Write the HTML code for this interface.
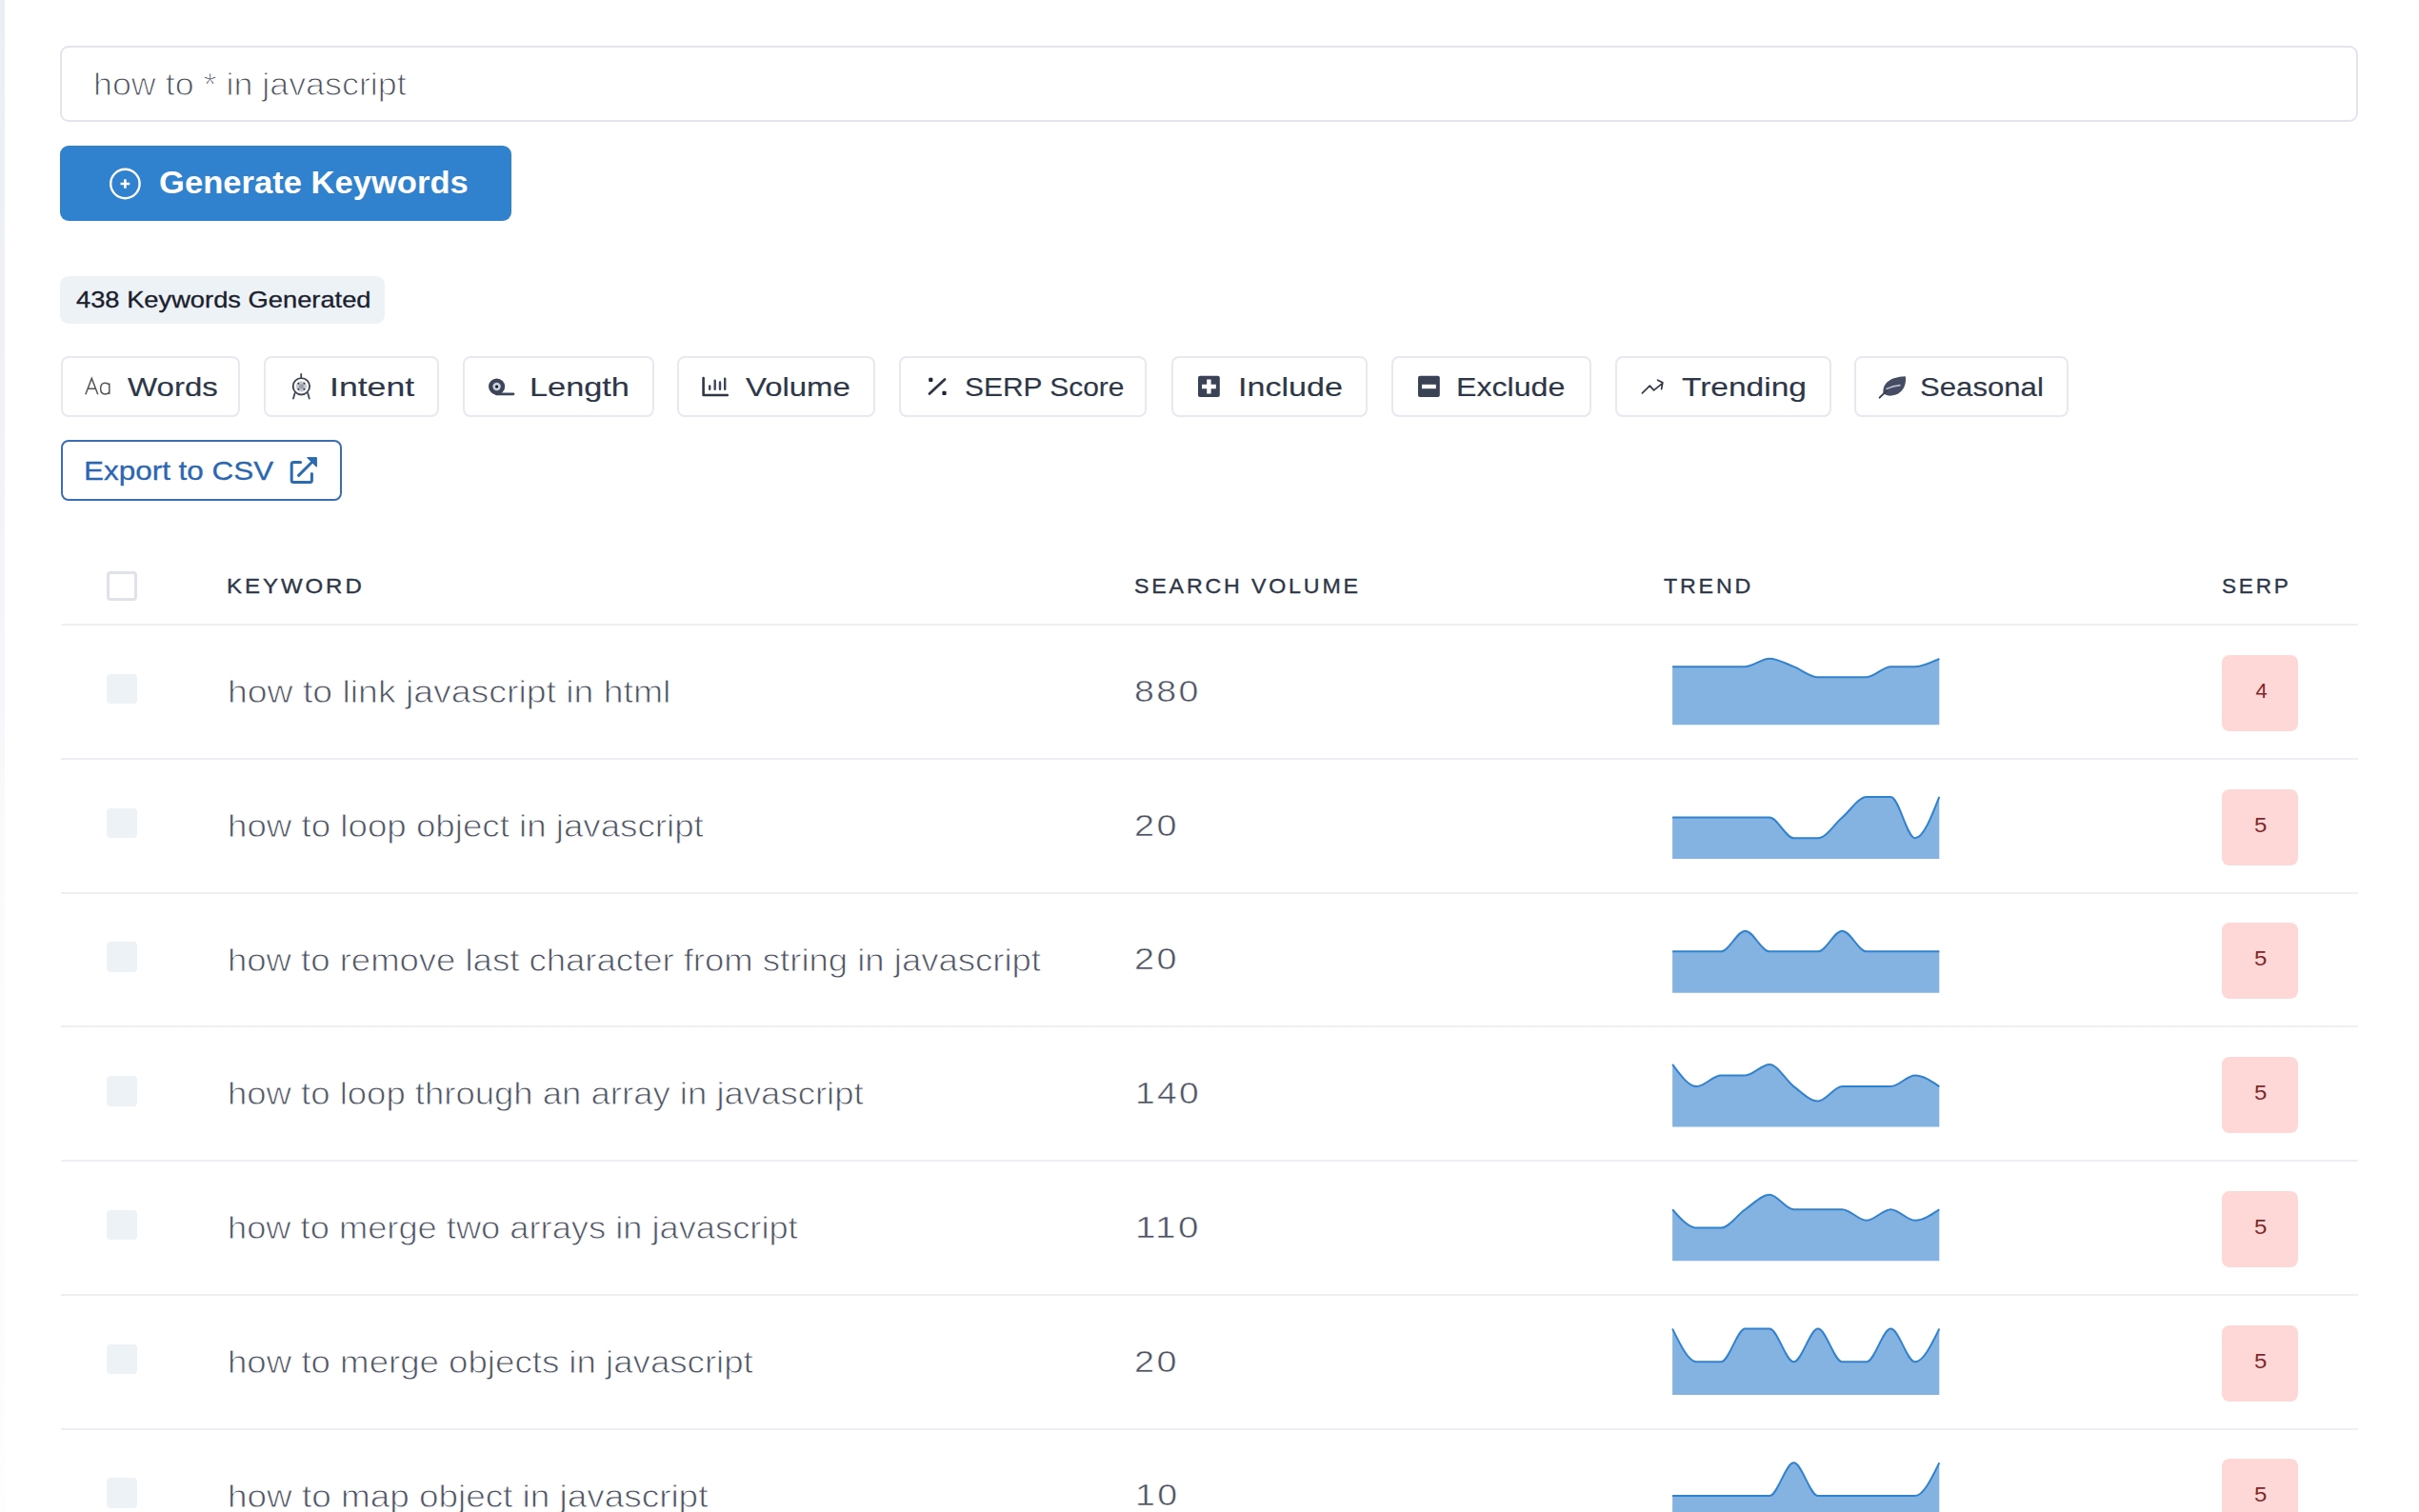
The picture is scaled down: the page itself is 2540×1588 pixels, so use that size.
<!DOCTYPE html>
<html><head><meta charset="utf-8">
<style>
html,body{margin:0;padding:0;background:#ffffff;}
body{width:2540px;height:1588px;position:relative;overflow:hidden;font-family:"Liberation Sans",sans-serif;}
#w{position:absolute;left:0;top:0;width:2540px;height:1588px;}
.t{position:absolute;white-space:nowrap;transform-origin:0 0;}
.box{position:absolute;box-sizing:border-box;}
svg{position:absolute;overflow:visible;}
</style></head><body><div id="w">
<div class="box" style="left:0;top:0;width:5px;height:1588px;background:linear-gradient(#eceef6 0px,#eef0f6 300px,#f6f7fa 760px,#fbfbfc 900px,#fdfdfd 1588px);"></div>
<div class="box" style="left:63px;top:48px;width:2413px;height:80px;border:2px solid #e2e5ee;border-radius:9px;"></div>
<div class="box" style="left:63px;top:153px;width:474px;height:79px;background:#3182ce;border-radius:9px;"></div>
<svg style="left:0;top:0" width="1" height="1"><circle cx="131.4" cy="193" r="15.2" fill="none" stroke="#fff" stroke-width="2.4"/><path d="M131.4 188.2V197.8M126.6 193H136.2" stroke="#fff" stroke-width="2.6"/></svg>
<div class="box" style="left:63px;top:290px;width:341px;height:50px;background:#edf2f7;border-radius:9px;"></div>
<div class="box" style="left:63.5px;top:374px;width:188.5px;height:64px;border:2px solid #e7e9f0;border-radius:8px;"></div>
<div class="box" style="left:276.5px;top:374px;width:184.5px;height:64px;border:2px solid #e7e9f0;border-radius:8px;"></div>
<div class="box" style="left:485.5px;top:374px;width:201.1px;height:64px;border:2px solid #e7e9f0;border-radius:8px;"></div>
<div class="box" style="left:711.0px;top:374px;width:208.4px;height:64px;border:2px solid #e7e9f0;border-radius:8px;"></div>
<div class="box" style="left:944.0px;top:374px;width:260.0px;height:64px;border:2px solid #e7e9f0;border-radius:8px;"></div>
<div class="box" style="left:1229.5px;top:374px;width:206.5px;height:64px;border:2px solid #e7e9f0;border-radius:8px;"></div>
<div class="box" style="left:1460.5px;top:374px;width:210.1px;height:64px;border:2px solid #e7e9f0;border-radius:8px;"></div>
<div class="box" style="left:1695.5px;top:374px;width:227.3px;height:64px;border:2px solid #e7e9f0;border-radius:8px;"></div>
<div class="box" style="left:1947.1px;top:374px;width:224.9px;height:64px;border:2px solid #e7e9f0;border-radius:8px;"></div>
<svg style="left:0;top:0" width="1" height="1"><path d="M89.8 414.2L96.3 397.4L102.8 414.2M92.2 408.2H100.4" fill="none" stroke="#555" stroke-width="1.5"/><path d="M114.8 402.6V414M114.8 404.5C114 402.8 112.3 402.2 110.3 402.2C107.3 402.2 105.6 404.6 105.6 408.1C105.6 411.6 107.3 414 110.3 414C112.3 414 114 413.2 114.8 411.5" fill="none" stroke="#555" stroke-width="1.5"/><circle cx="316.4" cy="405.8" r="8.7" fill="none" stroke="#3f4554" stroke-width="1.9"/><circle cx="316.4" cy="405.8" r="5.6" fill="#c4c8d0"/><circle cx="316.4" cy="405.8" r="2.6" fill="#9aa0aa"/><circle cx="313.4" cy="402.8" r="1" fill="#2f3544"/><circle cx="319.4" cy="402.8" r="1" fill="#2f3544"/><circle cx="313.4" cy="408.8" r="1" fill="#2f3544"/><circle cx="319.4" cy="408.8" r="1" fill="#2f3544"/><path d="M316.2 392.8V396.6M309.6 413L308 418.6M323.2 413L324.8 418.6" stroke="#3f4554" stroke-width="1.8" fill="none" stroke-linecap="round"/><circle cx="521.6" cy="406" r="8.6" fill="#3d4558"/><circle cx="521.6" cy="406" r="4.2" fill="#c9d0dc"/><circle cx="521.6" cy="406" r="1.6" fill="#111"/><path d="M521 413.8H539" stroke="#3d4558" stroke-width="2.8" stroke-linecap="round"/><path d="M738.6 397V415H763.8" fill="none" stroke="#2f3646" stroke-width="2.6" stroke-linecap="round" stroke-linejoin="round"/><path d="M745.2 405.5V408.8M750.7 399.8V408.8M756 401.5V408.8M761.2 397.6V408.8" stroke="#3d4558" stroke-width="2.4" stroke-linecap="round"/><path d="M976 413.6L992 398.4" stroke="#2f3646" stroke-width="2.8" stroke-linecap="round"/><rect x="975.2" y="396.8" width="4.2" height="4.2" rx="1" fill="#1e2433"/><rect x="989.4" y="410.8" width="4.2" height="4.2" rx="1" fill="#1e2433"/><rect x="1258" y="394.8" width="22.8" height="22.2" rx="2" fill="#3a4256"/><path d="M1269.4 398.6V413.4M1262 406H1276.8" stroke="#fff" stroke-width="4.4"/><rect x="1489" y="394.8" width="22.8" height="22.2" rx="2" fill="#3a4256"/><path d="M1493 406H1507.8" stroke="#fff" stroke-width="4.4"/><path d="M1724.4 412.8L1732.3 405.2L1736.6 409.8L1745.5 402.6M1740.6 399.2L1745.8 401.8L1744.6 408.6" fill="none" stroke="#333844" stroke-width="1.7" stroke-linecap="round" stroke-linejoin="round"/><path d="M1977.6 413.5C1976 404 1983 396 2000.8 395.3C2002.4 404.8 1997 414.8 1986 415.6C1982.6 415.8 1980 414.8 1977.6 413.5Z" fill="#454c63"/><path d="M1981 408.4C1986 406 1990.5 405 1995 404.6" stroke="#b7bfcc" stroke-width="1.6" fill="none" stroke-linecap="round"/><path d="M1973.6 417.6L1980.8 410.6" stroke="#3a3f4e" stroke-width="2" stroke-linecap="round"/></svg>
<div class="box" style="left:63.5px;top:462px;width:295px;height:64px;border:2px solid #3b6db3;border-radius:8px;"></div>
<svg style="left:0;top:0" width="1" height="1"><path d="M315.6 485.6H308.2Q306.2 485.6 306.2 487.6V504.6Q306.2 506.6 308.2 506.6H325.4Q327.4 506.6 327.4 504.6V497.6" fill="none" stroke="#2b6cb0" stroke-width="3" stroke-linecap="round" stroke-linejoin="round"/><path d="M313.6 499.4L327.2 485.8" stroke="#2b6cb0" stroke-width="3" stroke-linecap="round"/><path d="M322.6 480.6H332.4V490.2Z" fill="#2b6cb0" stroke="#2b6cb0" stroke-width="1" stroke-linejoin="round"/></svg>
<div class="box" style="left:112px;top:599.5px;width:31.5px;height:31px;border:3px solid #dfe2e8;border-radius:4px;"></div>
<div class="box" style="left:64px;top:655.0px;width:2412px;height:2px;background:#edeff2;"></div>
<div class="box" style="left:64px;top:795.8px;width:2412px;height:2px;background:#edeff2;"></div>
<div class="box" style="left:64px;top:936.5px;width:2412px;height:2px;background:#edeff2;"></div>
<div class="box" style="left:64px;top:1077.2px;width:2412px;height:2px;background:#edeff2;"></div>
<div class="box" style="left:64px;top:1218.0px;width:2412px;height:2px;background:#edeff2;"></div>
<div class="box" style="left:64px;top:1358.8px;width:2412px;height:2px;background:#edeff2;"></div>
<div class="box" style="left:64px;top:1499.5px;width:2412px;height:2px;background:#edeff2;"></div>
<div class="box" style="left:112px;top:707.7px;width:31.5px;height:31.5px;background:#edf2f7;border-radius:4px;"></div>
<div class="box" style="left:2333px;top:687.7px;width:80px;height:80px;background:#fed7d7;border-radius:8px;"></div>
<div class="box" style="left:112px;top:848.5px;width:31.5px;height:31.5px;background:#edf2f7;border-radius:4px;"></div>
<div class="box" style="left:2333px;top:828.5px;width:80px;height:80px;background:#fed7d7;border-radius:8px;"></div>
<div class="box" style="left:112px;top:989.2px;width:31.5px;height:31.5px;background:#edf2f7;border-radius:4px;"></div>
<div class="box" style="left:2333px;top:969.2px;width:80px;height:80px;background:#fed7d7;border-radius:8px;"></div>
<div class="box" style="left:112px;top:1130.0px;width:31.5px;height:31.5px;background:#edf2f7;border-radius:4px;"></div>
<div class="box" style="left:2333px;top:1110.0px;width:80px;height:80px;background:#fed7d7;border-radius:8px;"></div>
<div class="box" style="left:112px;top:1270.7px;width:31.5px;height:31.5px;background:#edf2f7;border-radius:4px;"></div>
<div class="box" style="left:2333px;top:1250.7px;width:80px;height:80px;background:#fed7d7;border-radius:8px;"></div>
<div class="box" style="left:112px;top:1411.5px;width:31.5px;height:31.5px;background:#edf2f7;border-radius:4px;"></div>
<div class="box" style="left:2333px;top:1391.5px;width:80px;height:80px;background:#fed7d7;border-radius:8px;"></div>
<div class="box" style="left:112px;top:1552.2px;width:31.5px;height:31.5px;background:#edf2f7;border-radius:4px;"></div>
<div class="box" style="left:2333px;top:1532.2px;width:80px;height:80px;background:#fed7d7;border-radius:8px;"></div>
<svg style="left:0;top:0" width="1" height="1"><path d="M1756.10,700.14 C1764.59,700.14 1773.08,700.14 1781.57,700.14 C1790.06,700.14 1798.55,700.14 1807.05,700.14 C1815.54,700.14 1824.03,700.14 1832.52,700.14 C1841.01,700.14 1849.50,691.80 1857.99,691.80 C1866.48,691.80 1874.97,696.90 1883.46,700.14 C1891.95,703.38 1900.45,711.26 1908.94,711.26 C1917.43,711.26 1925.92,711.26 1934.41,711.26 C1942.90,711.26 1951.39,711.26 1959.88,711.26 C1968.37,711.26 1976.86,700.14 1985.35,700.14 C1993.85,700.14 2002.34,700.14 2010.83,700.14 C2019.32,700.14 2027.81,695.97 2036.30,691.80 L2036.30,761.30 L1756.10,761.30 Z" fill="#84b3e2"/><path d="M1756.10,700.14 C1764.59,700.14 1773.08,700.14 1781.57,700.14 C1790.06,700.14 1798.55,700.14 1807.05,700.14 C1815.54,700.14 1824.03,700.14 1832.52,700.14 C1841.01,700.14 1849.50,691.80 1857.99,691.80 C1866.48,691.80 1874.97,696.90 1883.46,700.14 C1891.95,703.38 1900.45,711.26 1908.94,711.26 C1917.43,711.26 1925.92,711.26 1934.41,711.26 C1942.90,711.26 1951.39,711.26 1959.88,711.26 C1968.37,711.26 1976.86,700.14 1985.35,700.14 C1993.85,700.14 2002.34,700.14 2010.83,700.14 C2019.32,700.14 2027.81,695.97 2036.30,691.80" fill="none" stroke="#3182ce" stroke-width="2"/><path d="M1756.10,858.61 C1764.59,858.61 1773.08,858.61 1781.57,858.61 C1790.06,858.61 1798.55,858.61 1807.05,858.61 C1815.54,858.61 1824.03,858.61 1832.52,858.61 C1841.01,858.61 1849.50,858.61 1857.99,858.61 C1866.48,858.61 1874.97,880.33 1883.46,880.33 C1891.95,880.33 1900.45,880.33 1908.94,880.33 C1917.43,880.33 1925.92,865.85 1934.41,858.61 C1942.90,851.37 1951.39,836.89 1959.88,836.89 C1968.37,836.89 1976.86,836.89 1985.35,836.89 C1993.85,836.89 2002.34,880.33 2010.83,880.33 C2019.32,880.33 2027.81,858.61 2036.30,836.89 L2036.30,902.05 L1756.10,902.05 Z" fill="#84b3e2"/><path d="M1756.10,858.61 C1764.59,858.61 1773.08,858.61 1781.57,858.61 C1790.06,858.61 1798.55,858.61 1807.05,858.61 C1815.54,858.61 1824.03,858.61 1832.52,858.61 C1841.01,858.61 1849.50,858.61 1857.99,858.61 C1866.48,858.61 1874.97,880.33 1883.46,880.33 C1891.95,880.33 1900.45,880.33 1908.94,880.33 C1917.43,880.33 1925.92,865.85 1934.41,858.61 C1942.90,851.37 1951.39,836.89 1959.88,836.89 C1968.37,836.89 1976.86,836.89 1985.35,836.89 C1993.85,836.89 2002.34,880.33 2010.83,880.33 C2019.32,880.33 2027.81,858.61 2036.30,836.89" fill="none" stroke="#3182ce" stroke-width="2"/><path d="M1756.10,999.36 C1764.59,999.36 1773.08,999.36 1781.57,999.36 C1790.06,999.36 1798.55,999.36 1807.05,999.36 C1815.54,999.36 1824.03,977.64 1832.52,977.64 C1841.01,977.64 1849.50,999.36 1857.99,999.36 C1866.48,999.36 1874.97,999.36 1883.46,999.36 C1891.95,999.36 1900.45,999.36 1908.94,999.36 C1917.43,999.36 1925.92,977.64 1934.41,977.64 C1942.90,977.64 1951.39,999.36 1959.88,999.36 C1968.37,999.36 1976.86,999.36 1985.35,999.36 C1993.85,999.36 2002.34,999.36 2010.83,999.36 C2019.32,999.36 2027.81,999.36 2036.30,999.36 L2036.30,1042.80 L1756.10,1042.80 Z" fill="#84b3e2"/><path d="M1756.10,999.36 C1764.59,999.36 1773.08,999.36 1781.57,999.36 C1790.06,999.36 1798.55,999.36 1807.05,999.36 C1815.54,999.36 1824.03,977.64 1832.52,977.64 C1841.01,977.64 1849.50,999.36 1857.99,999.36 C1866.48,999.36 1874.97,999.36 1883.46,999.36 C1891.95,999.36 1900.45,999.36 1908.94,999.36 C1917.43,999.36 1925.92,977.64 1934.41,977.64 C1942.90,977.64 1951.39,999.36 1959.88,999.36 C1968.37,999.36 1976.86,999.36 1985.35,999.36 C1993.85,999.36 2002.34,999.36 2010.83,999.36 C2019.32,999.36 2027.81,999.36 2036.30,999.36" fill="none" stroke="#3182ce" stroke-width="2"/><path d="M1756.10,1117.91 C1764.59,1129.49 1773.08,1141.08 1781.57,1141.08 C1790.06,1141.08 1798.55,1129.49 1807.05,1129.49 C1815.54,1129.49 1824.03,1129.49 1832.52,1129.49 C1841.01,1129.49 1849.50,1117.91 1857.99,1117.91 C1866.48,1117.91 1874.97,1134.64 1883.46,1141.08 C1891.95,1147.51 1900.45,1156.52 1908.94,1156.52 C1917.43,1156.52 1925.92,1141.08 1934.41,1141.08 C1942.90,1141.08 1951.39,1141.08 1959.88,1141.08 C1968.37,1141.08 1976.86,1141.08 1985.35,1141.08 C1993.85,1141.08 2002.34,1129.49 2010.83,1129.49 C2019.32,1129.49 2027.81,1135.29 2036.30,1141.08 L2036.30,1183.55 L1756.10,1183.55 Z" fill="#84b3e2"/><path d="M1756.10,1117.91 C1764.59,1129.49 1773.08,1141.08 1781.57,1141.08 C1790.06,1141.08 1798.55,1129.49 1807.05,1129.49 C1815.54,1129.49 1824.03,1129.49 1832.52,1129.49 C1841.01,1129.49 1849.50,1117.91 1857.99,1117.91 C1866.48,1117.91 1874.97,1134.64 1883.46,1141.08 C1891.95,1147.51 1900.45,1156.52 1908.94,1156.52 C1917.43,1156.52 1925.92,1141.08 1934.41,1141.08 C1942.90,1141.08 1951.39,1141.08 1959.88,1141.08 C1968.37,1141.08 1976.86,1141.08 1985.35,1141.08 C1993.85,1141.08 2002.34,1129.49 2010.83,1129.49 C2019.32,1129.49 2027.81,1135.29 2036.30,1141.08" fill="none" stroke="#3182ce" stroke-width="2"/><path d="M1756.10,1270.24 C1764.59,1279.90 1773.08,1289.55 1781.57,1289.55 C1790.06,1289.55 1798.55,1289.55 1807.05,1289.55 C1815.54,1289.55 1824.03,1276.04 1832.52,1270.24 C1841.01,1264.45 1849.50,1254.80 1857.99,1254.80 C1866.48,1254.80 1874.97,1270.24 1883.46,1270.24 C1891.95,1270.24 1900.45,1270.24 1908.94,1270.24 C1917.43,1270.24 1925.92,1270.24 1934.41,1270.24 C1942.90,1270.24 1951.39,1281.83 1959.88,1281.83 C1968.37,1281.83 1976.86,1270.24 1985.35,1270.24 C1993.85,1270.24 2002.34,1281.83 2010.83,1281.83 C2019.32,1281.83 2027.81,1276.04 2036.30,1270.24 L2036.30,1324.30 L1756.10,1324.30 Z" fill="#84b3e2"/><path d="M1756.10,1270.24 C1764.59,1279.90 1773.08,1289.55 1781.57,1289.55 C1790.06,1289.55 1798.55,1289.55 1807.05,1289.55 C1815.54,1289.55 1824.03,1276.04 1832.52,1270.24 C1841.01,1264.45 1849.50,1254.80 1857.99,1254.80 C1866.48,1254.80 1874.97,1270.24 1883.46,1270.24 C1891.95,1270.24 1900.45,1270.24 1908.94,1270.24 C1917.43,1270.24 1925.92,1270.24 1934.41,1270.24 C1942.90,1270.24 1951.39,1281.83 1959.88,1281.83 C1968.37,1281.83 1976.86,1270.24 1985.35,1270.24 C1993.85,1270.24 2002.34,1281.83 2010.83,1281.83 C2019.32,1281.83 2027.81,1276.04 2036.30,1270.24" fill="none" stroke="#3182ce" stroke-width="2"/><path d="M1756.10,1395.55 C1764.59,1412.92 1773.08,1430.30 1781.57,1430.30 C1790.06,1430.30 1798.55,1430.30 1807.05,1430.30 C1815.54,1430.30 1824.03,1395.55 1832.52,1395.55 C1841.01,1395.55 1849.50,1395.55 1857.99,1395.55 C1866.48,1395.55 1874.97,1430.30 1883.46,1430.30 C1891.95,1430.30 1900.45,1395.55 1908.94,1395.55 C1917.43,1395.55 1925.92,1430.30 1934.41,1430.30 C1942.90,1430.30 1951.39,1430.30 1959.88,1430.30 C1968.37,1430.30 1976.86,1395.55 1985.35,1395.55 C1993.85,1395.55 2002.34,1430.30 2010.83,1430.30 C2019.32,1430.30 2027.81,1412.92 2036.30,1395.55 L2036.30,1465.05 L1756.10,1465.05 Z" fill="#84b3e2"/><path d="M1756.10,1395.55 C1764.59,1412.92 1773.08,1430.30 1781.57,1430.30 C1790.06,1430.30 1798.55,1430.30 1807.05,1430.30 C1815.54,1430.30 1824.03,1395.55 1832.52,1395.55 C1841.01,1395.55 1849.50,1395.55 1857.99,1395.55 C1866.48,1395.55 1874.97,1430.30 1883.46,1430.30 C1891.95,1430.30 1900.45,1395.55 1908.94,1395.55 C1917.43,1395.55 1925.92,1430.30 1934.41,1430.30 C1942.90,1430.30 1951.39,1430.30 1959.88,1430.30 C1968.37,1430.30 1976.86,1395.55 1985.35,1395.55 C1993.85,1395.55 2002.34,1430.30 2010.83,1430.30 C2019.32,1430.30 2027.81,1412.92 2036.30,1395.55" fill="none" stroke="#3182ce" stroke-width="2"/><path d="M1756.10,1571.05 C1764.59,1571.05 1773.08,1571.05 1781.57,1571.05 C1790.06,1571.05 1798.55,1571.05 1807.05,1571.05 C1815.54,1571.05 1824.03,1571.05 1832.52,1571.05 C1841.01,1571.05 1849.50,1571.05 1857.99,1571.05 C1866.48,1571.05 1874.97,1536.30 1883.46,1536.30 C1891.95,1536.30 1900.45,1571.05 1908.94,1571.05 C1917.43,1571.05 1925.92,1571.05 1934.41,1571.05 C1942.90,1571.05 1951.39,1571.05 1959.88,1571.05 C1968.37,1571.05 1976.86,1571.05 1985.35,1571.05 C1993.85,1571.05 2002.34,1571.05 2010.83,1571.05 C2019.32,1571.05 2027.81,1553.67 2036.30,1536.30 L2036.30,1605.80 L1756.10,1605.80 Z" fill="#84b3e2"/><path d="M1756.10,1571.05 C1764.59,1571.05 1773.08,1571.05 1781.57,1571.05 C1790.06,1571.05 1798.55,1571.05 1807.05,1571.05 C1815.54,1571.05 1824.03,1571.05 1832.52,1571.05 C1841.01,1571.05 1849.50,1571.05 1857.99,1571.05 C1866.48,1571.05 1874.97,1536.30 1883.46,1536.30 C1891.95,1536.30 1900.45,1571.05 1908.94,1571.05 C1917.43,1571.05 1925.92,1571.05 1934.41,1571.05 C1942.90,1571.05 1951.39,1571.05 1959.88,1571.05 C1968.37,1571.05 1976.86,1571.05 1985.35,1571.05 C1993.85,1571.05 2002.34,1571.05 2010.83,1571.05 C2019.32,1571.05 2027.81,1553.67 2036.30,1536.30" fill="none" stroke="#3182ce" stroke-width="2"/></svg>
<div class="t" style="left:97.53px;top:72.47px;font-size:33px;line-height:33px;color:#4a4e5a;font-weight:400;letter-spacing:0px;transform:scaleX(1.0860);-webkit-text-stroke:1.0px #fff;">how to * in javascript</div>
<div class="t" style="left:166.56px;top:174.70px;font-size:33.2px;line-height:33.2px;color:#ffffff;font-weight:700;letter-spacing:0px;transform:scaleX(1.0419);">Generate Keywords</div>
<div class="t" style="left:79.50px;top:303.52px;font-size:23.6px;line-height:23.6px;color:#1a202c;font-weight:400;letter-spacing:0px;transform:scaleX(1.1569);-webkit-text-stroke:0.3px #1a202c;">438 Keywords Generated</div>
<div class="t" style="left:133.70px;top:391.84px;font-size:28.3px;line-height:28.3px;color:#2d3748;font-weight:400;letter-spacing:0px;transform:scaleX(1.1675);-webkit-text-stroke:0.15px #2d3748;">Words</div>
<div class="t" style="left:346.08px;top:391.84px;font-size:28.3px;line-height:28.3px;color:#2d3748;font-weight:400;letter-spacing:0px;transform:scaleX(1.2580);-webkit-text-stroke:0.15px #2d3748;">Intent</div>
<div class="t" style="left:555.58px;top:391.84px;font-size:28.3px;line-height:28.3px;color:#2d3748;font-weight:400;letter-spacing:0px;transform:scaleX(1.2120);-webkit-text-stroke:0.15px #2d3748;">Length</div>
<div class="t" style="left:782.70px;top:391.84px;font-size:28.3px;line-height:28.3px;color:#2d3748;font-weight:400;letter-spacing:0px;transform:scaleX(1.1628);-webkit-text-stroke:0.15px #2d3748;">Volume</div>
<div class="t" style="left:1012.94px;top:391.84px;font-size:28.3px;line-height:28.3px;color:#2d3748;font-weight:400;letter-spacing:0px;transform:scaleX(1.0577);-webkit-text-stroke:0.15px #2d3748;">SERP Score</div>
<div class="t" style="left:1299.59px;top:391.84px;font-size:28.3px;line-height:28.3px;color:#2d3748;font-weight:400;letter-spacing:0px;transform:scaleX(1.2045);-webkit-text-stroke:0.15px #2d3748;">Include</div>
<div class="t" style="left:1529.43px;top:391.84px;font-size:28.3px;line-height:28.3px;color:#2d3748;font-weight:400;letter-spacing:0px;transform:scaleX(1.1357);-webkit-text-stroke:0.15px #2d3748;">Exclude</div>
<div class="t" style="left:1766.00px;top:391.84px;font-size:28.3px;line-height:28.3px;color:#2d3748;font-weight:400;letter-spacing:0px;transform:scaleX(1.1835);-webkit-text-stroke:0.15px #2d3748;">Trending</div>
<div class="t" style="left:2016.40px;top:391.84px;font-size:28.3px;line-height:28.3px;color:#2d3748;font-weight:400;letter-spacing:0px;transform:scaleX(1.1000);-webkit-text-stroke:0.15px #2d3748;">Seasonal</div>
<div class="t" style="left:88.09px;top:480.07px;font-size:28.5px;line-height:28.5px;color:#2a66b2;font-weight:400;letter-spacing:0px;transform:scaleX(1.1034);-webkit-text-stroke:0.3px #2a66b2;">Export to CSV</div>
<div class="t" style="left:237.89px;top:603.70px;font-size:22.8px;line-height:22.8px;color:#2d3748;font-weight:400;letter-spacing:2.8px;transform:scaleX(1.0530);-webkit-text-stroke:0.35px #2d3748;">KEYWORD</div>
<div class="t" style="left:1190.98px;top:603.70px;font-size:22.8px;line-height:22.8px;color:#2d3748;font-weight:400;letter-spacing:2.8px;transform:scaleX(1.0165);-webkit-text-stroke:0.35px #2d3748;">SEARCH VOLUME</div>
<div class="t" style="left:1746.50px;top:603.70px;font-size:22.8px;line-height:22.8px;color:#2d3748;font-weight:400;letter-spacing:2.8px;transform:scaleX(1.0169);-webkit-text-stroke:0.35px #2d3748;">TREND</div>
<div class="t" style="left:2333.41px;top:603.70px;font-size:22.8px;line-height:22.8px;color:#2d3748;font-weight:400;letter-spacing:2.8px;transform:scaleX(0.9913);-webkit-text-stroke:0.35px #2d3748;">SERP</div>
<div class="t" style="left:238.53px;top:710.17px;font-size:33px;line-height:33px;color:#4d5361;font-weight:400;letter-spacing:0px;transform:scaleX(1.1327);-webkit-text-stroke:0.8px #fff;">how to link javascript in html</div>
<div class="t" style="left:1191.41px;top:710.94px;font-size:31.5px;line-height:31.5px;color:#4d5361;font-weight:400;letter-spacing:2px;transform:scaleX(1.1926);-webkit-text-stroke:0.5px #fff;">880</div>
<div class="t" style="left:2368.40px;top:714.98px;font-size:22px;line-height:22px;color:#822727;font-weight:400;letter-spacing:0px;">4</div>
<div class="t" style="left:238.58px;top:850.92px;font-size:33px;line-height:33px;color:#4d5361;font-weight:400;letter-spacing:0px;transform:scaleX(1.1121);-webkit-text-stroke:0.8px #fff;">how to loop object in javascript</div>
<div class="t" style="left:1191.40px;top:851.69px;font-size:31.5px;line-height:31.5px;color:#4d5361;font-weight:400;letter-spacing:2px;transform:scaleX(1.2000);-webkit-text-stroke:0.5px #fff;">20</div>
<div class="t" style="left:2367.31px;top:855.73px;font-size:22px;line-height:22px;color:#822727;font-weight:400;letter-spacing:0px;transform:scaleX(1.0909);">5</div>
<div class="t" style="left:238.59px;top:991.67px;font-size:33px;line-height:33px;color:#4d5361;font-weight:400;letter-spacing:0px;transform:scaleX(1.1060);-webkit-text-stroke:0.8px #fff;">how to remove last character from string in javascript</div>
<div class="t" style="left:1191.40px;top:992.44px;font-size:31.5px;line-height:31.5px;color:#4d5361;font-weight:400;letter-spacing:2px;transform:scaleX(1.2000);-webkit-text-stroke:0.5px #fff;">20</div>
<div class="t" style="left:2367.31px;top:996.48px;font-size:22px;line-height:22px;color:#822727;font-weight:400;letter-spacing:0px;transform:scaleX(1.0909);">5</div>
<div class="t" style="left:238.59px;top:1132.42px;font-size:33px;line-height:33px;color:#4d5361;font-weight:400;letter-spacing:0px;transform:scaleX(1.1062);-webkit-text-stroke:0.8px #fff;">how to loop through an array in javascript</div>
<div class="t" style="left:1192.14px;top:1133.19px;font-size:31.5px;line-height:31.5px;color:#4d5361;font-weight:400;letter-spacing:2px;transform:scaleX(1.1792);-webkit-text-stroke:0.5px #fff;">140</div>
<div class="t" style="left:2367.31px;top:1137.23px;font-size:22px;line-height:22px;color:#822727;font-weight:400;letter-spacing:0px;transform:scaleX(1.0909);">5</div>
<div class="t" style="left:238.60px;top:1273.17px;font-size:33px;line-height:33px;color:#4d5361;font-weight:400;letter-spacing:0px;transform:scaleX(1.0991);-webkit-text-stroke:0.8px #fff;">how to merge two arrays in javascript</div>
<div class="t" style="left:1192.05px;top:1273.94px;font-size:31.5px;line-height:31.5px;color:#4d5361;font-weight:400;letter-spacing:2px;transform:scaleX(1.2255);-webkit-text-stroke:0.5px #fff;">110</div>
<div class="t" style="left:2367.31px;top:1277.98px;font-size:22px;line-height:22px;color:#822727;font-weight:400;letter-spacing:0px;transform:scaleX(1.0909);">5</div>
<div class="t" style="left:238.58px;top:1413.92px;font-size:33px;line-height:33px;color:#4d5361;font-weight:400;letter-spacing:0px;transform:scaleX(1.1101);-webkit-text-stroke:0.8px #fff;">how to merge objects in javascript</div>
<div class="t" style="left:1191.40px;top:1414.69px;font-size:31.5px;line-height:31.5px;color:#4d5361;font-weight:400;letter-spacing:2px;transform:scaleX(1.2000);-webkit-text-stroke:0.5px #fff;">20</div>
<div class="t" style="left:2367.31px;top:1418.73px;font-size:22px;line-height:22px;color:#822727;font-weight:400;letter-spacing:0px;transform:scaleX(1.0909);">5</div>
<div class="t" style="left:238.56px;top:1554.67px;font-size:33px;line-height:33px;color:#4d5361;font-weight:400;letter-spacing:0px;transform:scaleX(1.1178);-webkit-text-stroke:0.8px #fff;">how to map object in javascript</div>
<div class="t" style="left:1192.12px;top:1555.44px;font-size:31.5px;line-height:31.5px;color:#4d5361;font-weight:400;letter-spacing:2px;transform:scaleX(1.1912);-webkit-text-stroke:0.5px #fff;">10</div>
<div class="t" style="left:2367.31px;top:1559.48px;font-size:22px;line-height:22px;color:#822727;font-weight:400;letter-spacing:0px;transform:scaleX(1.0909);">5</div>
</div></body></html>
